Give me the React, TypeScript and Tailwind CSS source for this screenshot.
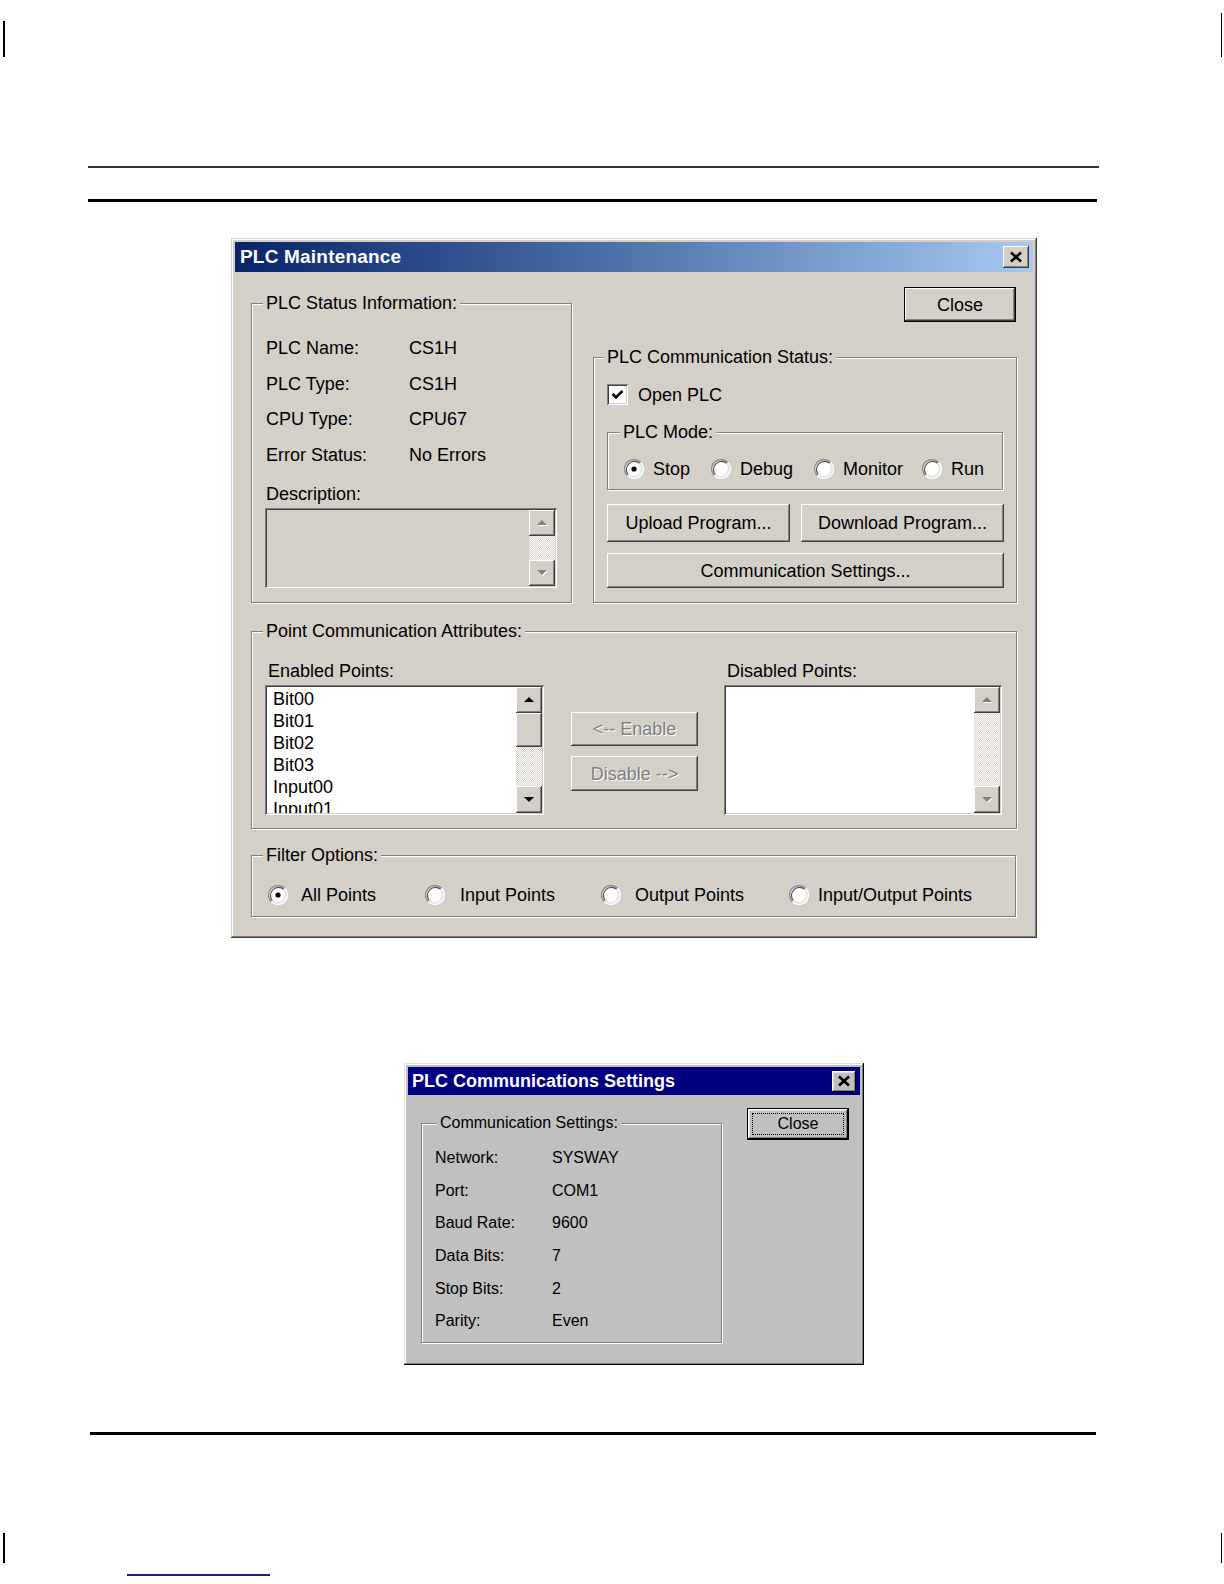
import React from "react"

const raised =
  "shadow-[inset_-1px_-1px_0_#404040,inset_1px_1px_0_#ffffff,inset_-2px_-2px_0_#808080,inset_2px_2px_0_#d4d0c8]"
const raised95 =
  "shadow-[inset_-1px_-1px_0_#000000,inset_1px_1px_0_#ffffff,inset_-2px_-2px_0_#808080,inset_2px_2px_0_#dfdfdf]"
const sunken =
  "shadow-[inset_1px_1px_0_#808080,inset_-1px_-1px_0_#ffffff,inset_2px_2px_0_#404040,inset_-2px_-2px_0_#d4d0c8]"
const frame =
  "shadow-[inset_-1px_-1px_0_#404040,inset_1px_1px_0_#d4d0c8,inset_-2px_-2px_0_#808080,inset_2px_2px_0_#ffffff]"
const frame95 =
  "shadow-[inset_-1px_-1px_0_#000000,inset_1px_1px_0_#dfdfdf,inset_-2px_-2px_0_#808080,inset_2px_2px_0_#ffffff]"
const dither = "bg-[image:repeating-conic-gradient(#ffffff_0%_25%,#d4d0c8_0%_50%)] bg-size-[2px_2px]"
const grayText = "text-[#808080] [text-shadow:1px_1px_0_#ffffff]"

function XGlyph() {
  return (
    <svg width="14" height="12" viewBox="0 0 14 12">
      <path d="M2 1.5 L12 10.5 M12 1.5 L2 10.5" stroke="#000" strokeWidth="2.6" fill="none" />
    </svg>
  )
}

function Arrow({ dir, disabled }: { dir: "up" | "down"; disabled?: boolean }) {
  const d = dir === "up" ? "M1 7 L6 2 L11 7 Z" : "M1 2 L6 7 L11 2 Z"
  return (
    <svg width="13" height="10" viewBox="0 0 13 10">
      {disabled && <path d={d} fill="#ffffff" transform="translate(1 1)" />}
      <path d={d} fill={disabled ? "#808080" : "#000000"} />
    </svg>
  )
}

function ScrollBtn({ dir, disabled, h }: { dir: "up" | "down"; disabled?: boolean; h: string }) {
  return (
    <div className={`${h} flex items-center justify-center bg-[#d4d0c8] ${raised}`}>
      <Arrow dir={dir} disabled={disabled} />
    </div>
  )
}

function Radio({ checked }: { checked?: boolean }) {
  return (
    <svg width="20" height="20" viewBox="0 0 20 20" className="shrink-0">
      <circle cx="10" cy="10" r="8.5" fill="#ffffff" />
      <path d="M3.28 16.72 A9.5 9.5 0 0 1 16.72 3.28" stroke="#909090" strokeWidth="1.3" fill="none" />
      <path d="M16.72 3.28 A9.5 9.5 0 0 1 3.28 16.72" stroke="#ffffff" strokeWidth="1.3" fill="none" />
      <path d="M4.3 15.7 A8.1 8.1 0 0 1 15.7 4.3" stroke="#505050" strokeWidth="1.2" fill="none" />
      <path d="M15.7 4.3 A8.1 8.1 0 0 1 4.3 15.7" stroke="#e4e2dc" strokeWidth="1.2" fill="none" />
      {checked && <circle cx="10" cy="10" r="2.6" fill="#000000" />}
    </svg>
  )
}

function Checkbox() {
  return (
    <div className={`w-[21px] h-[21px] bg-white flex items-center justify-center ${sunken}`}>
      <svg width="13" height="11" viewBox="0 0 13 11">
        <path d="M1.5 5 L5 8.5 L11.5 2" stroke="#000" strokeWidth="2.6" fill="none" />
      </svg>
    </div>
  )
}

function Group({
  label,
  className,
  labelClass,
  children,
}: {
  label: string
  className: string
  labelClass: string
  children: React.ReactNode
}) {
  return (
    <div className={`relative border border-[#808080] shadow-[1px_1px_0_#ffffff,inset_1px_1px_0_#ffffff] ${className}`}>
      <span className={`absolute top-[-11px] px-[3px] leading-[20px] whitespace-nowrap ${labelClass}`}>{label}</span>
      {children}
    </div>
  )
}

function Btn({ className, disabled, children }: { className: string; disabled?: boolean; children: React.ReactNode }) {
  return (
    <div
      className={`flex items-center justify-center bg-[#d4d0c8] whitespace-nowrap ${raised} ${disabled ? grayText : ""} ${className}`}
    >
      {children}
    </div>
  )
}

function ListBox({ items, thumb }: { items: string[]; thumb?: boolean }) {
  return (
    <div className={`mt-[4px] h-[130px] bg-white p-[2px] flex ${sunken}`}>
      <div className="flex-1 overflow-hidden pl-[6px] pt-[1px]">
        {items.map((i) => (
          <div key={i} className="h-[22px] leading-[22px]">
            {i}
          </div>
        ))}
      </div>
      <div className="w-[26px] flex flex-col">
        <ScrollBtn dir="up" disabled={!thumb} h="h-[26px]" />
        {thumb && <div className={`h-[34px] bg-[#d4d0c8] ${raised}`} />}
        <div className={`flex-1 ${dither}`} />
        <ScrollBtn dir="down" disabled={!thumb} h="h-[27px]" />
      </div>
    </div>
  )
}

const statusRows = [
  ["PLC Name:", "CS1H"],
  ["PLC Type:", "CS1H"],
  ["CPU Type:", "CPU67"],
  ["Error Status:", "No Errors"],
]

const commRows = [
  ["Network:", "SYSWAY"],
  ["Port:", "COM1"],
  ["Baud Rate:", "9600"],
  ["Data Bits:", "7"],
  ["Stop Bits:", "2"],
  ["Parity:", "Even"],
]

function Maintenance() {
  return (
    <div className={`ml-[231px] mt-[36px] w-[806px] h-[700px] bg-[#d4d0c8] p-[4px] text-[18px] leading-[20px] ${frame}`}>
      <div className="h-[30px] flex items-center justify-between pl-[5px] pr-[4px] bg-linear-to-r from-[#0a246a] to-[#a6caf0]">
        <span className="text-white font-bold text-[19px] tracking-[0.2px]">PLC Maintenance</span>
        <div className={`w-[26px] h-[22px] flex items-center justify-center bg-[#d4d0c8] ${raised}`}>
          <XGlyph />
        </div>
      </div>

      <div className="pl-[16px]">
        <div className="flex items-start">
          <Group
            label="PLC Status Information:"
            labelClass="left-[11px] bg-[#d4d0c8]"
            className="mt-[31px] w-[321px] h-[300px] pt-[26px] pl-[14px]"
          >
            {statusRows.map(([k, v]) => (
              <div key={k} className="flex h-[35.7px] items-center">
                <span className="w-[143px]">{k}</span>
                <span>{v}</span>
              </div>
            ))}
            <div className="mt-[10px] h-[22px] flex items-center">Description:</div>
            <div className={`mt-[3px] ml-[-1px] w-[292px] h-[80px] p-[2px] flex justify-end ${sunken}`}>
              <div className="w-[26px] flex flex-col">
                <ScrollBtn dir="up" disabled h="h-[26px]" />
                <div className={`flex-1 ${dither}`} />
                <ScrollBtn dir="down" disabled h="h-[26px]" />
              </div>
            </div>
          </Group>

          <div className="ml-[21px] w-[424px] flex flex-col">
            <div className="self-end mr-[1px] mt-[15px] w-[112px] h-[35px] border border-black">
              <Btn className="h-full">Close</Btn>
            </div>
            <Group
              label="PLC Communication Status:"
              labelClass="left-[10px] bg-[#d4d0c8]"
              className="mt-[35px] w-[424px] h-[246px] pt-[26px] pl-[13px]"
            >
              <div className="flex items-center h-[21px]">
                <Checkbox />
                <span className="ml-[10px]">Open PLC</span>
              </div>
              <Group
                label="PLC Mode:"
                labelClass="left-[12px] bg-[#d4d0c8]"
                className="mt-[27px] w-[396px] h-[58px] pt-[26px] pl-[16px]"
              >
                <div className="flex items-center h-[20px]">
                  <div className="w-[87px] flex items-center">
                    <Radio checked />
                    <span className="ml-[9px]">Stop</span>
                  </div>
                  <div className="w-[103px] flex items-center">
                    <Radio />
                    <span className="ml-[9px]">Debug</span>
                  </div>
                  <div className="w-[108px] flex items-center">
                    <Radio />
                    <span className="ml-[9px]">Monitor</span>
                  </div>
                  <div className="flex items-center">
                    <Radio />
                    <span className="ml-[9px]">Run</span>
                  </div>
                </div>
              </Group>
              <div className="mt-[14px] flex gap-[11px]">
                <Btn className="w-[183px] h-[38px]">Upload Program...</Btn>
                <Btn className="w-[203px] h-[38px]">Download Program...</Btn>
              </div>
              <Btn className="mt-[11px] w-[397px] h-[35px]">Communication Settings...</Btn>
            </Group>
          </div>
        </div>

        <Group
          label="Point Communication Attributes:"
          labelClass="left-[11px] bg-[#d4d0c8]"
          className="mt-[28px] w-[766px] h-[198px] pt-[29px] pl-[13px] flex items-start"
        >
          <div className="w-[279px]">
            <div className="pl-[3px] h-[20px]">Enabled Points:</div>
            <ListBox thumb items={["Bit00", "Bit01", "Bit02", "Bit03", "Input00", "Input01"]} />
          </div>
          <div className="ml-[27px] mt-[51px] flex flex-col">
            <Btn disabled className="w-[127px] h-[34px]">
              &lt;-- Enable
            </Btn>
            <Btn disabled className="mt-[10px] w-[127px] h-[35px]">
              Disable --&gt;
            </Btn>
          </div>
          <div className="ml-[26px] w-[278px]">
            <div className="pl-[3px] h-[20px]">Disabled Points:</div>
            <ListBox items={[]} />
          </div>
        </Group>

        <Group
          label="Filter Options:"
          labelClass="left-[11px] bg-[#d4d0c8]"
          className="mt-[26px] w-[765px] h-[62px] pt-[29px] pl-[16px]"
        >
          <div className="flex items-center h-[20px] whitespace-nowrap">
            <div className="w-[157px] flex items-center">
              <Radio checked />
              <span className="ml-[13px]">All Points</span>
            </div>
            <div className="w-[176px] flex items-center">
              <Radio />
              <span className="ml-[15px]">Input Points</span>
            </div>
            <div className="w-[188px] flex items-center">
              <Radio />
              <span className="ml-[14px]">Output Points</span>
            </div>
            <div className="flex items-center">
              <Radio />
              <span className="ml-[9px]">Input/Output Points</span>
            </div>
          </div>
        </Group>
      </div>
    </div>
  )
}

function CommSettings() {
  return (
    <div className={`ml-[404px] mt-[125px] w-[460px] h-[302px] bg-[#c0c0c0] p-[4px] text-[16px] leading-[20px] ${frame95}`}>
      <div className="h-[28px] bg-[#000080] flex items-center justify-between pl-[4px] pr-[4px]">
        <span className="text-white font-bold text-[18px]">PLC Communications Settings</span>
        <div className={`w-[24px] h-[21px] bg-[#c0c0c0] flex items-center justify-center ${raised95}`}>
          <XGlyph />
        </div>
      </div>
      <div className="flex items-start pl-[13px]">
        <Group
          label="Communication Settings:"
          labelClass="left-[15px] bg-[#c0c0c0]"
          className="mt-[28px] w-[301px] h-[220px] pt-[18px] pl-[13px]"
        >
          {commRows.map(([k, v]) => (
            <div key={k} className="flex h-[32.6px] items-center">
              <span className="w-[117px]">{k}</span>
              <span>{v}</span>
            </div>
          ))}
        </Group>
        <div className="ml-[25px] mt-[13px] w-[102px] h-[32px] border border-black">
          <div className={`h-full p-[4px] bg-[#c0c0c0] ${raised95}`}>
            <div className="h-full border border-dotted border-black flex items-center justify-center">Close</div>
          </div>
        </div>
      </div>
    </div>
  )
}

export default function App() {
  return (
    <div className="w-[1224px] h-[1584px] bg-white overflow-hidden font-['Liberation_Sans',Arial,sans-serif] text-black">
      <div className="flex justify-between items-end h-[57px] pl-[3px] pr-[2px]">
        <div className="w-[1.5px] h-[36px] bg-black" />
        <div className="w-[1.5px] h-[44px] bg-black" />
      </div>
      <div className="ml-[88px] mt-[109px] w-[1011px] h-[2px] bg-[#333333]" />
      <div className="ml-[88px] mt-[31px] w-[1009px] h-[3px] bg-black" />

      <Maintenance />
      <CommSettings />

      <div className="ml-[90px] mt-[67px] w-[1006px] h-[3px] bg-black" />
      <div className="mt-[98px] flex justify-between h-[30px] pl-[3px] pr-[2px]">
        <div className="w-[1.5px] h-full bg-black" />
        <div className="w-[1.5px] h-full bg-black" />
      </div>
      <div className="ml-[127px] mt-[11px] w-[143px] h-[2px] bg-[#1c1c8c]" />
    </div>
  )
}
